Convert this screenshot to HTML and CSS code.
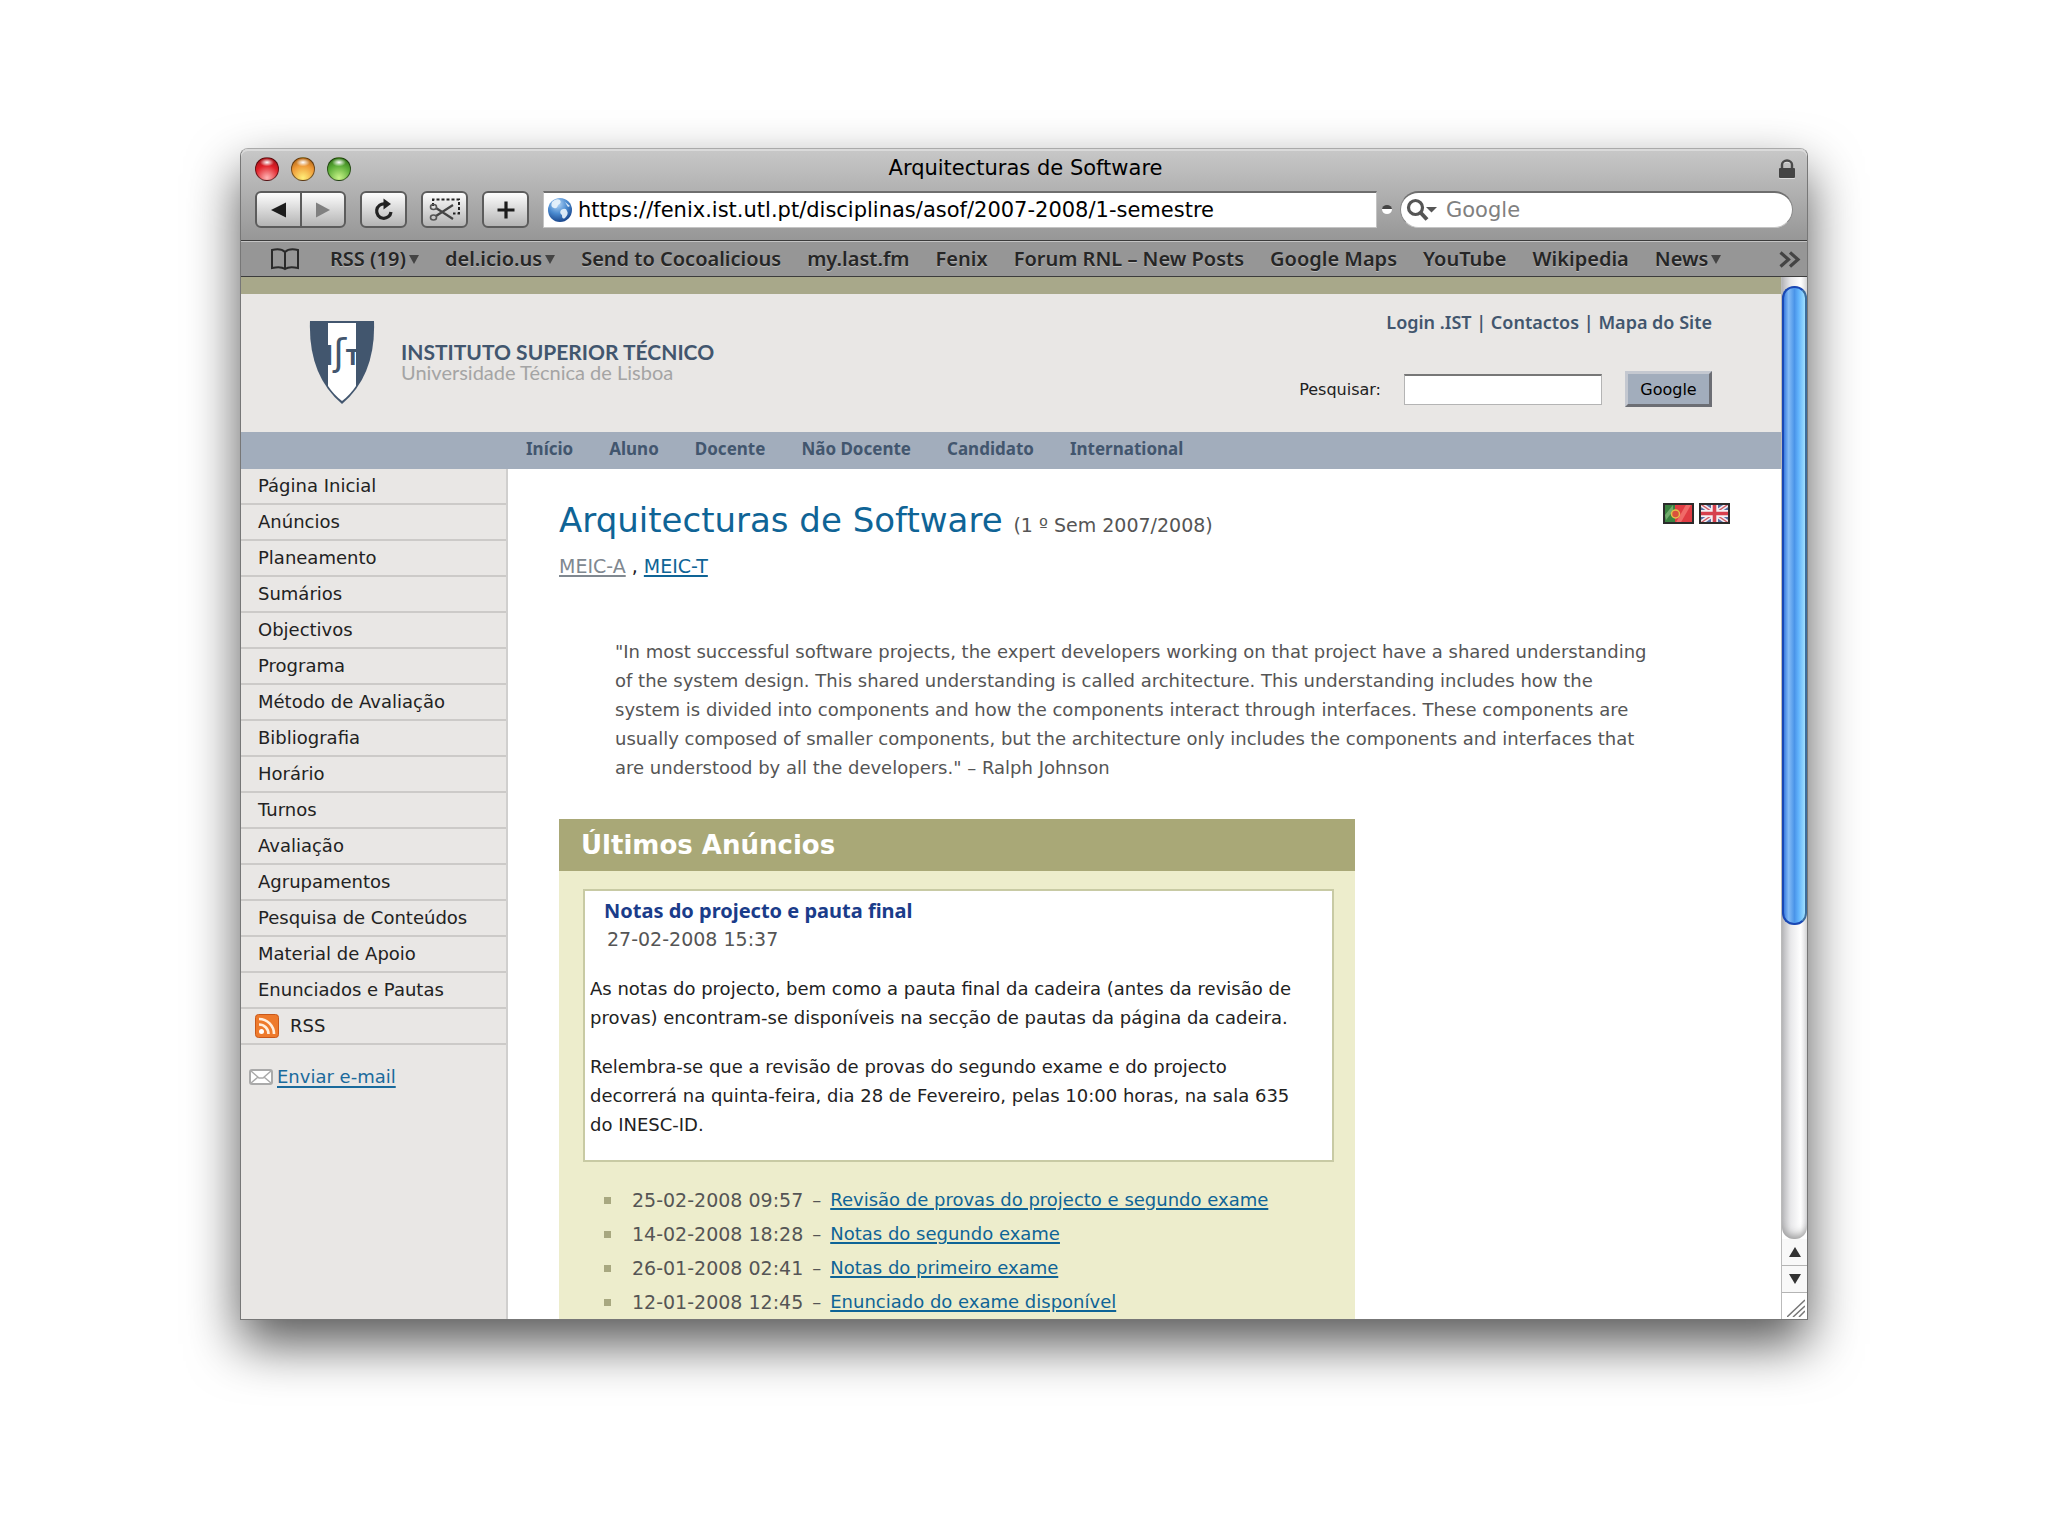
FILE: index.html
```html
<!DOCTYPE html>
<html lang="pt">
<head>
<meta charset="utf-8">
<title>Arquitecturas de Software</title>
<link rel="stylesheet" href="styles.css">
</head>
<body>
<div class="window">
  <div class="chrome">
    <div class="titlebar">
      <div class="lights">
        <button class="light light-red" aria-label="Fechar"></button>
        <button class="light light-amber" aria-label="Minimizar"></button>
        <button class="light light-green" aria-label="Ampliar"></button>
      </div>
      <div class="window-title">Arquitecturas de Software</div>
      <svg class="lock" width="18" height="20" viewBox="0 0 18 20"><path d="M4 9V6a5 4.500 0 0 1 10 0v3" fill="none" stroke="#4a4a4a" stroke-width="2.500"/><rect x="1" y="9" width="16" height="10" rx="1" fill="#444"/></svg>
    </div>
    <div class="toolbar">
      <div class="nav-pair">
        <button class="tool" aria-label="Anterior"><svg width="20" height="18" viewBox="0 0 20 18"><path d="M2 9L17 1.500V16.500Z" fill="#1c1c1c"/></svg></button>
        <button class="tool" aria-label="Seguinte"><svg width="20" height="18" viewBox="0 0 20 18"><path d="M17 9L3 1.500V16.500Z" fill="#808080"/></svg></button>
      </div>
      <button class="tool" aria-label="Recarregar"><svg width="22" height="24" viewBox="0 0 22 24"><path d="M12 6A7.200 7.200 0 1 0 18 14" fill="none" stroke="#222" stroke-width="3.200"/><path d="M10.500 0.500L18 6L10.500 11.500Z" fill="#222"/></svg></button>
      <button class="tool" aria-label="Recortar"><svg width="32" height="26" viewBox="0 0 32 26"><path d="M4 9V2.500H30V16.500H24" fill="none" stroke="#222" stroke-width="2" stroke-dasharray="3 2"/><path d="M7 19L24 8M7 11L24 22" stroke="#444" stroke-width="2.200"/><ellipse cx="4.500" cy="10" rx="3" ry="2.500" fill="none" stroke="#555" stroke-width="1.600"/><ellipse cx="4.500" cy="20.500" rx="3" ry="2.500" fill="none" stroke="#555" stroke-width="1.600"/></svg></button>
      <button class="tool" aria-label="Adicionar"><svg width="20" height="20" viewBox="0 0 20 20"><path d="M10 1.500V18.500M1.500 10H18.500" stroke="#1c1c1c" stroke-width="3.200"/></svg></button>
      <div class="fields">
        <label class="url">
          <svg width="26" height="26" viewBox="0 0 26 26"><defs><radialGradient id="globe" cx="40%" cy="25%" r="80%"><stop offset="0" stop-color="#b7d8f8"/><stop offset=".5" stop-color="#4b8bd0"/><stop offset="1" stop-color="#143f86"/></radialGradient></defs><circle cx="13" cy="13" r="12" fill="url(#globe)"/><path d="M5 5Q9 1 13 3Q15 6 11 8Q10 12 7 11Q3 10 5 5ZM14 13Q19 10 20 14Q22 17 18 21Q15 23 15 18Q12 16 14 13ZM18 5L23 9L21 10Z" fill="#eaf4fc" opacity=".9"/></svg>
          <input type="text" aria-label="Endereço" value="https://fenix.ist.utl.pt/disciplinas/asof/2007-2008/1-semestre">
        </label>
        <span class="snap"></span>
        <label class="search">
          <svg width="32" height="24" viewBox="0 0 32 24"><circle cx="9.500" cy="9.500" r="7" fill="none" stroke="#555" stroke-width="3.200"/><path d="M14.500 14.500L21 21.500" stroke="#555" stroke-width="4"/><path d="M20 9H31L25.500 14.500Z" fill="#555"/></svg>
          <input type="search" aria-label="Pesquisar na Web" placeholder="Google">
        </label>
      </div>
    </div>
    <nav class="bookmarks">
      <svg class="book" width="30" height="23" viewBox="0 0 30 23"><path d="M15 4Q11 0 2 2V20Q11 18 15 21Q19 18 28 20V2Q19 0 15 4V21" fill="none" stroke="#2a2a2a" stroke-width="2"/></svg>
      <a href="#" class="has-menu">RSS (19)</a>
      <a href="#" class="has-menu">del.icio.us</a>
      <a href="#">Send to Cocoalicious</a>
      <a href="#">my.last.fm</a>
      <a href="#">Fenix</a>
      <a href="#">Forum RNL – New Posts</a>
      <a href="#">Google Maps</a>
      <a href="#">YouTube</a>
      <a href="#">Wikipedia</a>
      <a href="#" class="has-menu">News</a>
      <svg class="more" width="22" height="17" viewBox="0 0 22 17"><path d="M1.500 1.500L9.500 8.500L1.500 15.500M11 1.500L19 8.500L11 15.500" fill="none" stroke="#444" stroke-width="3.200"/></svg>
    </nav>
  </div>
  <div class="viewport">
    <div class="page">
      <header class="site-header">
        <a href="#" class="brand">
          <svg width="66" height="86" viewBox="0 0 66 86"><path d="M1 1H65Q67 55 33 84Q-1 55 1 1Z" fill="#42566e"/><path d="M19 3H47V66Q41 75 33 81Q25 75 19 66Z" fill="#fff"/><text x="33" y="45" fill="#42566e" text-anchor="middle" font-family="Liberation Sans Narrow, DejaVu Sans Condensed, sans-serif" font-weight="700" font-size="26">I<tspan font-family="DejaVu Sans, sans-serif" font-weight="400" font-size="38">ʃ</tspan><tspan font-size="22">T</tspan></text></svg>
          <span class="brand-text"><strong>INSTITUTO SUPERIOR TÉCNICO</strong><span>Universidade Técnica de Lisboa</span></span>
        </a>
        <div class="header-tools">
          <div class="top-links"><a href="#">Login .IST</a> | <a href="#">Contactos</a> | <a href="#">Mapa do Site</a></div>
          <form class="site-search">
            <label for="q">Pesquisar:</label>
            <input type="text" id="q">
            <button type="button">Google</button>
          </form>
        </div>
      </header>
      <nav class="site-nav">
        <a href="#">Início</a><a href="#">Aluno</a><a href="#">Docente</a><a href="#">Não Docente</a><a href="#">Candidato</a><a href="#">International</a>
      </nav>
      <div class="columns">
        <aside class="sidebar">
          <ul>
            <li><a href="#">Página Inicial</a></li>
            <li><a href="#">Anúncios</a></li>
            <li><a href="#">Planeamento</a></li>
            <li><a href="#">Sumários</a></li>
            <li><a href="#">Objectivos</a></li>
            <li><a href="#">Programa</a></li>
            <li><a href="#">Método de Avaliação</a></li>
            <li><a href="#">Bibliografia</a></li>
            <li><a href="#">Horário</a></li>
            <li><a href="#">Turnos</a></li>
            <li><a href="#">Avaliação</a></li>
            <li><a href="#">Agrupamentos</a></li>
            <li><a href="#">Pesquisa de Conteúdos</a></li>
            <li><a href="#">Material de Apoio</a></li>
            <li><a href="#">Enunciados e Pautas</a></li>
            <li class="rss"><a href="#"><svg width="24" height="24" viewBox="0 0 24 24"><rect x=".5" y=".5" width="23" height="23" rx="3" fill="#ee7a2c" stroke="#c9581a"/><circle cx="6.500" cy="17.500" r="2.500" fill="#fff"/><path d="M4 10.500A9.500 9.500 0 0 1 13.500 20M4 5A15 15 0 0 1 19 20" fill="none" stroke="#ffeedd" stroke-width="2.600"/></svg>RSS</a></li>
          </ul>
          <div class="mail"><svg width="24" height="16" viewBox="0 0 24 16"><rect x="1" y="1" width="22" height="14" rx="2" fill="#fff" stroke="#aaa" stroke-width="2"/><path d="M2 2L10 9H14L22 2M2 14L9 8M22 14L15 8" fill="none" stroke="#aaa" stroke-width="1.500"/></svg><a href="#">Enviar e-mail</a></div>
        </aside>
        <main class="content">
          <div class="heading">
            <h1>Arquitecturas de Software <small>(1 º Sem 2007/2008)</small></h1>
            <div class="flags">
              <a href="#" aria-label="Português"><svg width="31" height="21" viewBox="0 0 31 21"><rect width="31" height="21" fill="#e03c43"/><rect width="12" height="21" fill="#3a8240"/><path d="M12 21L24 0H29L17 21Z" fill="#f06a68"/><path d="M2 12L10 2V8L3 17Z" fill="#72ab6c"/><circle cx="12.500" cy="11" r="4" fill="#d9523c" stroke="#e3c04a" stroke-width="1.500"/><rect x="1" y="1" width="29" height="19" fill="none" stroke="#2b2b2b" stroke-width="2"/></svg></a>
              <a href="#" aria-label="English"><svg width="31" height="21" viewBox="0 0 31 21"><rect width="31" height="21" fill="#566da3"/><path d="M0 0L31 21M31 0L0 21" stroke="#f1eef2" stroke-width="4.500"/><path d="M0 0L31 21M31 0L0 21" stroke="#d35b66" stroke-width="1.400"/><path d="M15.500 0V21M0 10.500H31" stroke="#f3f0f3" stroke-width="7"/><path d="M15.500 0V21M0 10.500H31" stroke="#d6404d" stroke-width="3.600"/><rect x="1" y="1" width="29" height="19" fill="none" stroke="#2b2b2b" stroke-width="2"/></svg></a>
            </div>
          </div>
          <p class="degrees"><a href="#" class="visited">MEIC-A</a> , <a href="#">MEIC-T</a></p>
          <blockquote>"In most successful software projects, the expert developers working on that project have a shared understanding of the system design. This shared understanding is called architecture. This understanding includes how the system is divided into components and how the components interact through interfaces. These components are usually composed of smaller components, but the architecture only includes the components and interfaces that are understood by all the developers." – Ralph Johnson</blockquote>
          <section class="news">
            <h2>Últimos Anúncios</h2>
            <div class="news-body">
              <article class="card">
                <h3><a href="#">Notas do projecto e pauta final</a></h3>
                <div class="date"><time>27-02-2008 15:37</time></div>
                <p>As notas do projecto, bem como a pauta final da cadeira (antes da revisão de provas) encontram-se disponíveis na secção de pautas da página da cadeira.</p>
                <p>Relembra-se que a revisão de provas do segundo exame e do projecto decorrerá na quinta-feira, dia 28 de Fevereiro, pelas 10:00 horas, na sala 635 do INESC-ID.</p>
              </article>
              <ul class="older">
                <li><time>25-02-2008 09:57</time> – <a href="#">Revisão de provas do projecto e segundo exame</a></li>
                <li><time>14-02-2008 18:28</time> – <a href="#">Notas do segundo exame</a></li>
                <li><time>26-01-2008 02:41</time> – <a href="#">Notas do primeiro exame</a></li>
                <li><time>12-01-2008 12:45</time> – <a href="#">Enunciado do exame disponível</a></li>
              </ul>
            </div>
          </section>
        </main>
      </div>
    </div>
    <div class="scrollbar" aria-hidden="true">
      <div class="track"><div class="thumb"></div></div>
      <div class="arrow"><svg width="12" height="10" viewBox="0 0 12 10"><path d="M6 0L12 10H0Z" fill="#333"/></svg></div>
      <div class="arrow"><svg width="12" height="10" viewBox="0 0 12 10"><path d="M6 10L12 0H0Z" fill="#333"/></svg></div>
      <div class="grip"><svg width="18" height="18" viewBox="0 0 18 18"><path d="M0 18L18 1M6 18L18 7M12 18L18 12" stroke="#777" stroke-width="1.500"/></svg></div>
    </div>
  </div>
</div>
</body>
</html>
```
FILE: styles.css
```css
* { box-sizing: border-box; }

body {
  margin: 0;
  padding: 148px 240px 160px;
  background: #fff;
  color: #222;
  font: 18px/29px "DejaVu Sans", sans-serif;
}

a { color: inherit; text-decoration: none; }
h1, h2, h3, p, ul, blockquote { margin: 0; padding: 0; }
ul { list-style: none; }
svg { display: block; flex: none; }
input, button { font: inherit; color: inherit; }

.window {
  border: 1px solid #777;
  border-top-color: #aaa;
  border-radius: 8px 8px 0 0;
  background: #fff;
  box-shadow: 0 24px 52px rgba(0, 0, 0, 0.66);
}

/* Browser chrome */
.chrome {
  border-radius: 7px 7px 0 0;
  background: linear-gradient(#c8c8c8, #969696 92px, #969696);
  box-shadow: inset 0 2px 0 #dadada;
}
.titlebar {
  display: grid;
  grid-template-columns: 1fr auto 1fr;
  align-items: center;
  height: 42px;
  padding: 0 11px 3px 14px;
}
.lights { display: flex; gap: 12px; }
.light {
  width: 24px;
  height: 24px;
  padding: 0;
  border: 1px solid rgba(0, 0, 0, 0.5);
  border-radius: 50%;
}
.light-red { background: radial-gradient(ellipse 7px 4px at 50% 20%, #fff, transparent), radial-gradient(circle at 50% 90%, #ffb5b5, #e02028 55%, #8c1014); }
.light-amber { background: radial-gradient(ellipse 7px 4px at 50% 20%, #fff, transparent), radial-gradient(circle at 50% 90%, #ffee78, #ee9a38 55%, #9a5208); }
.light-green { background: radial-gradient(ellipse 7px 4px at 50% 20%, #fff, transparent), radial-gradient(circle at 50% 90%, #c8f488, #5cad38 55%, #24600c); }
.window-title { color: #000; font-size: 21px; }
.lock { justify-self: end; filter: drop-shadow(0 1px 0 #ddd); }

.toolbar {
  display: flex;
  gap: 14px;
  padding: 0 14px 12px;
  border-bottom: 1px solid #3c3c3c;
}
.tool {
  display: flex;
  align-items: center;
  justify-content: center;
  width: 47px;
  height: 37px;
  padding: 0;
  border: 2px solid #5c5c5c;
  border-radius: 6px;
  background: linear-gradient(#fdfdfd, #b4b4b4);
}
.nav-pair { display: flex; }
.nav-pair .tool:first-child { border-radius: 6px 0 0 6px; border-right-width: 1px; width: 46px; }
.nav-pair .tool:last-child { border-radius: 0 6px 6px 0; border-left-width: 1px; width: 45px; }
.fields { display: flex; flex: 1; align-items: center; }
.url, .search {
  display: flex;
  align-items: center;
  height: 37px;
  background: #fff;
  border: 1px solid #c4c4c4;
  border-top: 2px solid #6e6e6e;
}
.url { flex: 1; gap: 5px; padding-left: 3px; }
.search { width: 393px; gap: 8px; padding: 0 14px 0 5px; border-radius: 19px; border-left-color: #888; border-right-color: #888; }
.url input, .search input {
  flex: 1;
  min-width: 0;
  padding: 0;
  border: 0;
  background: none;
  color: #000;
  font-size: 21px;
  outline: 0;
  appearance: none;
}
.search input::placeholder { color: #808080; opacity: 1; }
.snap {
  width: 10px;
  height: 9px;
  margin: 0 8px 0 5px;
  border-radius: 50%;
  background: linear-gradient(#444 45%, #fff 45%);
}

.bookmarks {
  display: flex;
  align-items: center;
  gap: 26px;
  height: 36px;
  padding: 0 6px 0 29px;
  border-top: 1px solid #c4c4c4;
  border-bottom: 1px solid #3c3c3c;
  color: #262626;
  font: 600 20px/24px "Noto Sans", sans-serif;
  text-shadow: 0 1px 0 #b8b8b8;
  white-space: nowrap;
}
.book { margin-right: 4px; }
.more { margin-left: auto; }
.has-menu { display: flex; align-items: center; gap: 3px; }
.has-menu::after {
  content: "";
  border: 5px solid transparent;
  border-top: 9px solid #444;
  border-bottom: 0;
}

/* Scrolling area */
.viewport { display: flex; }
.page { flex: 1; min-width: 0; border-top: 17px solid #a8a88a; }

.site-header {
  display: flex;
  justify-content: space-between;
  align-items: flex-end;
  padding: 16px 69px 25px 68px;
  background: #e9e7e5;
}
.brand { display: flex; align-items: center; gap: 26px; padding-bottom: 1px; font: 20px/20px Lato, sans-serif; }
.brand-text { display: flex; flex-direction: column; padding-bottom: 3px; color: #a4a4a4; }
.brand-text strong { color: #42566e; font-size: 21px; }
.header-tools { display: flex; flex-direction: column; align-items: flex-end; gap: 37px; }
.top-links { color: #42566e; font: 600 18px/24px "Noto Sans", sans-serif; }
.site-search { display: flex; align-items: center; font-size: 16px; }
.site-search input {
  width: 198px;
  height: 31px;
  margin: 0 23px;
  border: 1px solid #b4b4b4;
  border-top: 2px solid #777;
  background: #fff;
}
.site-search button {
  width: 87px;
  height: 36px;
  padding: 0;
  border: 3px solid;
  border-color: #c4c8d0 #6c6e74 #6c6e74 #c4c8d0;
  background: #a2adbc;
  color: #000;
}

.site-nav {
  display: flex;
  gap: 36px;
  height: 37px;
  padding-left: 285px;
  background: #a2adbc;
  color: #42566e;
  font: 700 17px/34px "Noto Sans", sans-serif;
}

.columns { display: flex; }
.sidebar {
  flex: none;
  width: 267px;
  border-right: 2px solid #d0cfce;
  background: #e9e7e5;
}
.sidebar li { height: 36px; padding-left: 17px; border-bottom: 2px solid #cccac8; line-height: 34px; }
.sidebar .rss { padding-left: 14px; }
.rss a { display: flex; align-items: center; gap: 11px; }
.mail { display: flex; align-items: center; gap: 4px; padding: 17px 8px; }
.mail a { color: #1a6a9c; text-decoration: underline 2px; text-underline-offset: 3px; }

.content { flex: 1; min-width: 0; padding: 31px 51px 0; color: #555; }
.heading { display: flex; justify-content: space-between; align-items: flex-start; }
h1 { color: #0f6496; font-size: 34px; line-height: 40px; font-weight: 400; }
h1 small { color: #555; font-size: 19px; line-height: 20px; }
.flags { display: flex; gap: 5px; padding-top: 3px; }
.degrees { margin-top: 12px; color: #222; font-size: 19px; }
.degrees a, .older a { color: #0f6496; text-decoration: underline 2px; text-underline-offset: 2px; }
.degrees .visited { color: #808890; }
blockquote { margin: 56px 76px 37px 56px; }

.news { width: 68%; background: #ededcc; }
h2 {
  padding: 0 22px;
  background: #a9a877;
  color: #fff;
  font-size: 26px;
  line-height: 52px;
}
.news-body { padding: 18px 21px 0 24px; }
.card {
  padding: 5px 24px 21px 5px;
  border: 2px solid #c8caa4;
  background: #fff;
  color: #222;
}
.card h3 { padding-left: 14px; color: #1a3c8a; font: 700 20px/29px "Noto Sans", sans-serif; }
.card p { margin-top: 20px; }
.date { padding-left: 17px; color: #555; }
time { font-size: 19px; }
.older { padding: 21px 0 0 21px; }
.older li { display: flex; align-items: center; gap: 9px; line-height: 34px; white-space: nowrap; }
.older li::before { content: ""; width: 7px; height: 7px; margin-right: 12px; background: #a8a880; }

/* Scroll bar */
.scrollbar { display: flex; flex-direction: column; width: 26px; border-left: 1px solid #bbb; }
.track {
  flex: 1;
  padding-top: 9px;
  border-radius: 0 0 12px 12px;
  background: linear-gradient(90deg, #bdbdc0, #e8e8ea 35%, #fff 75%, #e4e4e6);
  box-shadow: inset 0 -6px 8px -3px #999;
}
.thumb {
  height: 67%;
  border: 2px solid #1a48b4;
  border-right-color: #3b6c9c;
  border-radius: 12px;
  background: linear-gradient(90deg, #3a7ce0, #84bcf6 22%, #4a94e8 50%, #62b4fc 70%, #9fe0ff);
}
.arrow, .grip { display: flex; align-items: center; justify-content: center; height: 27px; border-bottom: 1px solid #b4b4b4; background: #f8f8f8; }
.grip { align-items: flex-end; justify-content: flex-end; height: 26px; padding: 2px; border: 0; background: #fff; }
```
